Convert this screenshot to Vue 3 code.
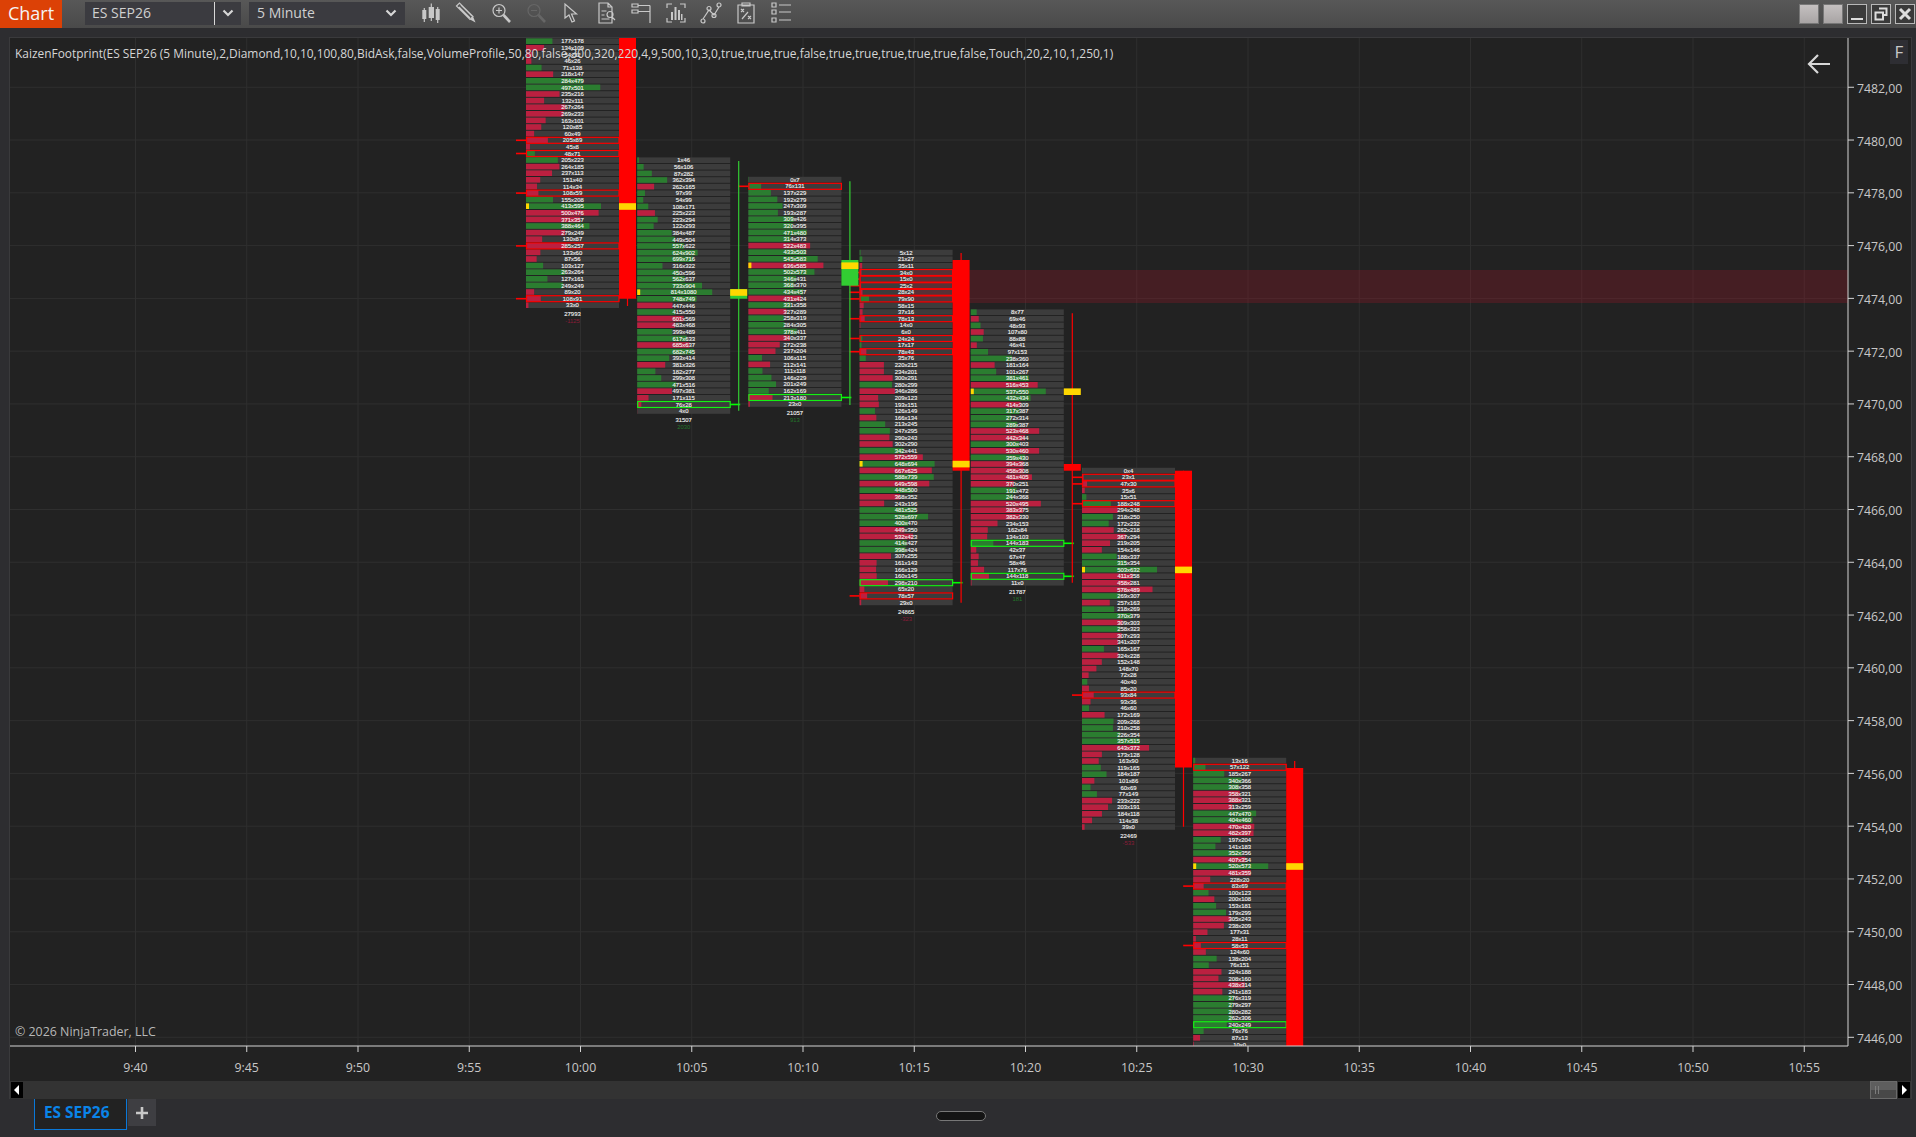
<template>
  <div class="window">
    <header class="toolbar">
      <div class="chart-tab">Chart</div>
      <div class="instrument">
        <span class="instrument-name">ES SEP26</span>
        <span class="chev-box">
          <svg width="12" height="8" viewBox="0 0 12 8"><path d="M1.5 1.5 6 6l4.5-4.5" fill="none" stroke="#d6d6d6" stroke-width="2.2" /></svg>
        </span>
      </div>
      <div class="interval">
        <span>5 Minute</span>
        <svg width="12" height="8" viewBox="0 0 12 8"><path d="M1.5 1.5 6 6l4.5-4.5" fill="none" stroke="#d6d6d6" stroke-width="2.2" /></svg>
      </div>
      <div class="tools">
        <svg v-for="icon in icons" :key="icon.name" width="22" height="22" viewBox="0 0 22 22">
          <path :d="icon.line" fill="none" :stroke="icon.dim ? '#666' : '#c8c8c8'" stroke-width="1.2" />
          <path v-if="icon.solid" :d="icon.solid" :fill="icon.dim ? '#666' : '#c8c8c8'" />
          <path v-if="icon.thick" :d="icon.thick" fill="none" :stroke="icon.dim ? '#666' : '#c8c8c8'" stroke-width="2.6" />
        </svg>
      </div>
      <div class="win-btns">
        <span class="win-btn plain"></span>
        <span class="win-btn plain"></span>
        <span class="win-btn">
          <svg width="18" height="18" viewBox="0 0 18 18"><path d="M3 14h12" stroke="#ddd" stroke-width="2" /></svg>
        </span>
        <span class="win-btn">
          <svg width="18" height="18" viewBox="0 0 18 18"><path d="M7 3.5h7.5V10H12M3.5 7.5H11V14.5H3.5Z" fill="none" stroke="#ddd" stroke-width="2" /></svg>
        </span>
        <span class="win-btn">
          <svg width="18" height="18" viewBox="0 0 18 18"><path d="M4 4l10 10M14 4 4 14" stroke="#ddd" stroke-width="3" /></svg>
        </span>
      </div>
    </header>

    <main class="panel">
      <div class="chart">
        <svg class="plot" width="1901" height="1043" viewBox="10 38 1901 1043">
          <defs>
            <clipPath id="plot-clip"><rect x="10" y="38" width="1838" height="1008" /></clipPath>
          </defs>

          <g stroke="#2f2f2f" stroke-width="1">
            <line v-for="p in prices" :key="p.label" x1="10" x2="1848" :y1="p.y" :y2="p.y" />
            <line v-for="t in times" :key="t.label" :x1="t.x" :x2="t.x" y1="38" y2="1046" />
          </g>

          <g clip-path="url(#plot-clip)">
            <g v-for="bar in bars" :key="bar.x">
              <g v-for="row in bar.rows" :key="row.y">
                <rect :x="bar.x" :y="row.y - 2.9" width="93" height="5.6" fill="#3c3c3c" />
                <rect :x="bar.x" :y="row.y - 2.9" :width="row.fill" height="5.6" :fill="row.color" />
                <rect v-if="row.poc" :x="bar.x" :y="row.y - 2.9" width="3" height="5.6" fill="#ffd700" />
                <line v-if="row.tick === 'r'" :x1="bar.x - 10" :x2="bar.x" :y1="row.y" :y2="row.y" stroke="#f00" stroke-width="1.6" />
                <line v-if="row.tick === 'g'" :x1="bar.x + 93" :x2="bar.x + 103" :y1="row.y" :y2="row.y" stroke="#0f0" stroke-width="1.6" />
              </g>
            </g>

            <rect x="913" y="270" width="935" height="33" fill="rgba(160, 20, 40, 0.28)" />

            <g v-for="bar in bars" :key="bar.x">
              <g v-for="row in bar.rows" :key="row.y">
                <rect v-if="row.box" :x="bar.x + 0.5" :y="row.y - 3" width="92.5" height="6" fill="none" :stroke="row.box" stroke-width="1.2" />
              </g>
              <line :x1="bar.x + 101.5" :x2="bar.x + 101.5" :y1="bar.wick[0]" :y2="bar.wick[1]" :stroke="bar.color" stroke-width="1.2" />
              <rect :x="bar.x + 93" :y="bar.body[0]" width="17" :height="bar.body[1] - bar.body[0]" :fill="bar.color" />
              <rect :x="bar.x + 93" :y="bar.pocY - 3.1" width="17" height="6.6" fill="#ffd700" />
            </g>

            <g v-for="bar in bars" :key="bar.x">
              <text v-for="row in bar.rows" :key="row.y" :x="bar.x + 46.5" :y="row.y + 2" class="cell">{{ row.text }}</text>
              <text :x="bar.x + 46.5" :y="bar.totalY + 2" class="cell">{{ bar.total }}</text>
              <text :x="bar.x + 46.5" :y="bar.totalY + 9" class="cell-delta" :class="bar.delta > 0 ? 'up' : 'down'">{{ bar.delta }}</text>
            </g>
          </g>

          <path d="M10 1046H1848V38" fill="none" stroke="#d4d4d4" stroke-width="1" />
          <g stroke="#d4d4d4" stroke-width="1">
            <line v-for="p in prices" :key="p.label" x1="1848" x2="1854" :y1="p.y" :y2="p.y" />
            <line v-for="t in times" :key="t.label" :x1="t.x" :x2="t.x" y1="1046" y2="1052" />
          </g>
          <text v-for="p in prices" :key="p.label" x="1857" :y="p.y + 5.5" class="axis-label">{{ p.label }}</text>
          <text v-for="t in times" :key="t.label" :x="t.x" y="1072" text-anchor="middle" class="axis-label">{{ t.label }}</text>

          <path d="M1818 55 1809 64 1818 73M1809 64H1830" fill="none" stroke="#d8d8d8" stroke-width="2.2" />
        </svg>
        <div class="indicator-label">KaizenFootprint(ES SEP26 (5 Minute),2,Diamond,10,10,100,80,BidAsk,false,VolumeProfile,50,80,false,300,320,220,4,9,500,10,3,0,true,true,true,false,true,true,true,true,true,false,Touch,20,2,10,1,250,1)</div>
        <div class="copyright">© 2026 NinjaTrader, LLC</div>
        <div class="f-btn">F</div>
      </div>
      <div class="scrollbar">
        <span class="sb-arrow">
          <svg width="6" height="10" viewBox="0 0 6 10"><path d="M5 0 0 5l5 5Z" fill="#fff" /></svg>
        </span>
        <span class="sb-thumb"><i></i><i></i></span>
        <span class="sb-arrow">
          <svg width="6" height="10" viewBox="0 0 6 10"><path d="M1 0l5 5-5 5Z" fill="#fff" /></svg>
        </span>
      </div>
    </main>

    <footer class="tabs">
      <div class="tab">ES SEP26</div>
      <div class="add-tab">
        <svg width="14" height="14" viewBox="0 0 14 14"><path d="M7 1v12M1 7h12" stroke="#c8c8c8" stroke-width="2.6" /></svg>
      </div>
      <div class="grip"></div>
    </footer>
  </div>
</template>

<script setup>
const priceY = (p) => 1037.3 - (p - 7446) * 26.39;

const prices = [];
for (let p = 7482; p >= 7446; p -= 2) {
  prices.push({ label: p + ",00", y: priceY(p) });
}

const timeLabels = ["9:40", "9:45", "9:50", "9:55", "10:00", "10:05", "10:10", "10:15", "10:20", "10:25", "10:30", "10:35", "10:40", "10:45", "10:50", "10:55"];
const times = timeLabels.map((label, i) => ({ label, x: 135.5 + 111.25 * i }));

// r = red box + tick, R = red box no tick, g = green box + tick
const rawBars = [
  {
    top: 41.3, color: "#f00", body: [38, 298.7], wick: [38, 306], total: 27993, delta: -1125,
    cells: "177x178 134x109 54x32 46x26 71x138 218x147 284x479 497x501 235x216 132x111 267x264 269x233 163x101 120x85 60x49 205x89r 45x8 48x71r 205x223 264x185 237x113 151x40 114x34 108x59r 155x208 413x595 500x476 371x357 388x464 279x249 130x87 285x257r 133x60 87x56 103x127 263x264 127x161 249x249 89x20 108x91r 33x0",
  },
  {
    top: 160.3, color: "#32cd32", body: [289, 298.7], wick: [161, 410.7], total: 31507, delta: 2030,
    cells: "1x46 56x106 87x282 362x394 262x165 97x99 54x99 108x171 225x223 223x294 122x293 384x487 449x504 557x622 624x902 699x716 316x322 450x596 562x637 733x904 814x1080 748x749 447x446 415x550 601x569 483x468 399x489 617x633 685x637 682x745 393x414 381x326 182x277 299x308 471x516 497x381 171x115 76x28g 4x0",
  },
  {
    top: 179.7, color: "#32cd32", body: [260, 285.7], wick: [181.3, 405], total: 21057, delta: 913,
    cells: "0x7 76x131r 137x229 192x279 247x309 193x287 309x426 320x395 471x480 314x373 522x483 433x503 545x583 636x585 502x573 346x431 368x370 434x457 431x424 331x358 327x289 258x319 284x305 378x411 340x337 272x238 237x204 106x115 212x141 111x118 146x229 201x249 162x169 213x180g 23x0",
  },
  {
    top: 252.7, color: "#f00", body: [260, 470.7], wick: [253, 602.7], total: 24865, delta: -323,
    cells: "5x12 21x27 35x11 34x0r 15x0r 25x2r 28x24r 79x90r 58x15 37x16 78x13r 14x0 6x0 24x24r 17x17 78x43r 35x76 220x215 234x201 300x291 280x299 346x286 209x123 193x151 126x149 166x134 213x245 247x295 290x243 302x290 342x441 572x559 648x694 667x625 588x739 649x598 448x500 368x352 243x196 481x525 528x697 400x470 449x350 532x423 414x427 398x424 307x255 161x143 166x129 160x145 298x210g 65x20 78x57r 29x0",
  },
  {
    top: 312.3, color: "#f00", body: [464, 470.7], wick: [313.3, 582.7], total: 21787, delta: 181,
    cells: "8x77 69x46 48x93 107x80 88x88 46x41 97x153 238x360 181x164 101x267 381x461 516x453 537x550 432x434 414x309 317x387 272x314 289x387 523x468 442x344 300x403 530x460 359x430 394x368 458x308 481x405 370x251 191x472 244x368 520x495 383x375 382x330 234x153 162x84 134x103 144x183g 42x37 67x47 58x46 117x76 144x118g 11x0",
  },
  {
    top: 470.7, color: "#f00", body: [470.7, 767.5], wick: [470.7, 826.7], total: 22469, delta: -533,
    cells: "0x4 23x1r 47x30r 35x6 15x51 188x248r 294x248 218x250 172x232 262x218 367x294 219x205 154x146 188x337 315x354 503x632 411x358 458x281 578x489 269x307 257x163 218x269 370x379 309x303 258x323 307x293 341x207 165x167 324x228 152x148 148x70 72x28 40x40 85x20 93x84r 93x36 46x60 172x169 209x268 210x258 226x354 357x515 643x372 173x128 163x90 119x165 184x187 101x86 60x69 77x149 233x222 203x191 184x118 114x38 39x0",
  },
  {
    top: 760.7, color: "#f00", body: [768, 1046], wick: [761, 1046], total: "", delta: "",
    cells: "13x16 57x122R 185x267 340x366 308x358 358x321 388x321 313x259 447x470 404x460 470x420 482x397 197x204 141x183 352x356 407x354 520x573 481x359 228x20 83x69r 100x123 200x108 153x181 179x299 305x243 238x209 177x31 28x11 58x53r 124x60 138x204 76x151 224x188 208x160 438x314 241x183 276x319 279x297 280x282 262x306 240x249g 76x76 87x13 10x0",
  },
];

const bars = rawBars.map((raw, i) => {
  const parsed = raw.cells.split(" ").map((cell) => {
    const m = cell.match(/^(\d+)x(\d+)([rRg]?)$/);
    return { bid: +m[1], ask: +m[2], mark: m[3] };
  });
  const max = Math.max(...parsed.map((c) => c.bid + c.ask));
  let pocY = 0;
  const rows = parsed.map((c, n) => {
    const y = raw.top + n * 6.6;
    const poc = c.bid + c.ask === max;
    if (poc) pocY = y;
    return {
      y,
      poc,
      text: c.bid + "x" + c.ask,
      fill: ((c.bid + c.ask) / max) * 75,
      color: c.bid > c.ask ? "#bb2040" : "#2b7d30",
      box: c.mark === "g" ? "#14f014" : c.mark ? "#f00" : null,
      tick: c.mark === "R" ? null : c.mark,
    };
  });
  return {
    x: 526 + 111.2 * i,
    color: raw.color,
    body: raw.body,
    wick: raw.wick,
    total: raw.total,
    delta: raw.delta,
    rows,
    pocY,
    totalY: raw.top + parsed.length * 6.6 + 2.4,
  };
});

const icons = [
  { name: "bars", line: "M4.3 6v14M11.3 1.5V19M17.7 5v16", solid: "M2.3 8h4v9h-4zM8.7 5H14v11H8.7zM15.7 7h4v11h-4z" },
  { name: "draw", line: "M1.5 4 4.5 1 18 14.5 15 17.5ZM4 5l11 11M6 3l11 11", solid: "M15 17.5 18 14.5 20.5 20.5Z" },
  { name: "zoom-in", line: "M15 8.5a6 6 0 1 1-12 0 6 6 0 1 1 12 0M9 5.5v6M6 8.5h6", thick: "M13.5 13 20 20" },
  { name: "zoom-out", dim: true, line: "M15 8.5a6 6 0 1 1-12 0 6 6 0 1 1 12 0M6 8.5h6", thick: "M13.5 13 20 20" },
  { name: "cursor", line: "M5 2V16L9 13 12 20 14.5 19 11.5 12H16.5Z" },
  { name: "doc", line: "M4 21V1H13L17 5V21ZM13 1V5H17M6.5 9h5M6.5 13h3M6.5 17h8M18 12.5a3 3 0 1 1-6 0 3 3 0 1 1 6 0M17 15l3 3" },
  { name: "props", line: "M2 2h6v3H2zM2 8h6v3H2zM8 3.5H20M8 9.5H20M20 3.5V21" },
  { name: "data", line: "M2 6V2H7M15 2H20V6M2 16V20H7M15 20H20V16", solid: "M6 10h2v8H6zM9.5 5h2v13h-2zM13 8h2v10h-2zM16 12h1.5v6H16z" },
  { name: "draw-line", line: "M3 17 9 8 14 13 19 5M5 19a2 2 0 1 1-4 0 2 2 0 1 1 4 0M11 6.5a2 2 0 1 1-4 0 2 2 0 1 1 4 0M16 13.5a2 2 0 1 1-4 0 2 2 0 1 1 4 0M21 3a2 2 0 1 1-4 0 2 2 0 1 1 4 0" },
  { name: "strategies", line: "M3 3H19V21H3ZM7 1H15V4H7ZM6 7l3 3M9 7l-3 3M13 14l3 3M16 14l-3 3M7 17l6-7" },
  { name: "list", line: "M2 1h4v4H2zM2 8h4v4H2zM2 16h4v4H2zM9 3H21M9 10H21M9 18H21" },
];
</script>

<style scoped>
.window {
  width: 1916px;
  height: 1137px;
  display: flex;
  flex-direction: column;
  background: #2d2d30;
  overflow: hidden;
  font-family: "Open Sans", sans-serif;
  color: #d0d0d0;
}
.toolbar {
  height: 28px;
  flex: none;
  display: flex;
  align-items: center;
  background: linear-gradient(#585858, #4a4a4a);
}
.chart-tab {
  width: 62px;
  height: 28px;
  background: #dc4106;
  color: #f4f4f4;
  font-size: 18px;
  line-height: 27px;
  text-align: center;
}
.instrument {
  display: flex;
  height: 23px;
  margin-left: 23px;
  margin-bottom: 2px;
  background: #3b3b40;
  font-size: 14px;
}
.instrument-name {
  width: 130px;
  padding-left: 7px;
  box-sizing: border-box;
  line-height: 22px;
  border-right: 1px solid #d8d8d8;
}
.chev-box {
  width: 26px;
  display: flex;
  align-items: center;
  justify-content: center;
}
.interval {
  display: flex;
  align-items: center;
  justify-content: space-between;
  width: 156px;
  height: 23px;
  box-sizing: border-box;
  margin-left: 8px;
  margin-bottom: 2px;
  padding: 0 8px 0 8px;
  background: #3b3b40;
  font-size: 14px;
  line-height: 22px;
}
.tools {
  display: flex;
  gap: 13px;
  margin-left: 15px;
  margin-bottom: 2px;
}
.win-btns {
  display: flex;
  gap: 4px;
  margin-left: auto;
  margin-right: 1px;
}
.win-btn {
  width: 20px;
  height: 20px;
  box-sizing: border-box;
  border: 1px solid #b8b8b8;
  background: #3a3a3a;
  display: flex;
  align-items: center;
  justify-content: center;
}
.win-btn.plain {
  border-color: #777;
  background: linear-gradient(#c4c0c0, #a8a4a4);
}
.panel {
  margin: 9px 4px 0 9px;
  height: 1062px;
  flex: none;
  box-sizing: border-box;
  border: 1px solid #3a3a3c;
  display: flex;
  flex-direction: column;
  background: #222;
}
.chart {
  position: relative;
  height: 1043px;
  flex: none;
}
.plot {
  display: block;
}
.cell,
.cell-delta {
  font-family: "Liberation Sans", sans-serif;
  font-size: 5.9px;
  text-anchor: middle;
}
.cell {
  fill: #f2f2f2;
  stroke: #f2f2f2;
  stroke-width: 0.12px;
}
.cell-delta.up {
  fill: #22762a;
}
.cell-delta.down {
  fill: #8a1c38;
}
.axis-label {
  font-family: "Open Sans", sans-serif;
  font-size: 12.3px;
  fill: #c8c8c8;
}
.indicator-label {
  position: absolute;
  left: 5px;
  top: 6px;
  font-size: 11.93px;
  line-height: 18px;
  color: #d6d6d6;
  white-space: nowrap;
}
.copyright {
  position: absolute;
  left: 5px;
  top: 985px;
  font-size: 12.4px;
  line-height: 18px;
  color: #b8b8b8;
}
.f-btn {
  position: absolute;
  left: 1880px;
  top: 2px;
  width: 18px;
  height: 24px;
  background: #2e2e33;
  color: #c8c8c8;
  font-size: 17px;
  line-height: 24px;
  text-align: center;
}
.scrollbar {
  height: 18px;
  flex: none;
  display: flex;
  align-items: center;
  gap: 1px;
  padding: 0 1px;
  background: #333;
}
.sb-arrow {
  width: 12px;
  height: 16px;
  background: #000;
  display: flex;
  align-items: center;
  justify-content: center;
}
.sb-arrow:first-child {
  margin-right: auto;
}
.sb-thumb {
  width: 27px;
  height: 18px;
  box-sizing: border-box;
  border: 1px solid #6a6a6a;
  background: linear-gradient(#5e5e5e 50%, #484848 50%);
  display: flex;
  gap: 2px;
  padding: 4px 0 4px 4px;
}
.sb-thumb i {
  width: 1px;
  background: #7c7c7c;
}
.tabs {
  flex: 1;
  display: flex;
  align-items: flex-start;
  padding-left: 34px;
}
.tab {
  width: 93px;
  height: 31px;
  box-sizing: border-box;
  padding-left: 9px;
  border: 1px solid #0a78d8;
  border-top: none;
  background: #222;
  color: #0a84e8;
  font-weight: 700;
  font-size: 15.4px;
  line-height: 28px;
}
.add-tab {
  width: 28px;
  height: 27px;
  margin-left: 1px;
  background: #3e3e42;
  display: flex;
  align-items: center;
  justify-content: center;
}
.grip {
  width: 50px;
  height: 10px;
  box-sizing: border-box;
  margin: 12px 0 0 780px;
  border: 1px solid #777;
  border-radius: 5px;
  background: #141414;
}
</style>

<style>
html, body {
  background: #2d2d30;
}
</style>
